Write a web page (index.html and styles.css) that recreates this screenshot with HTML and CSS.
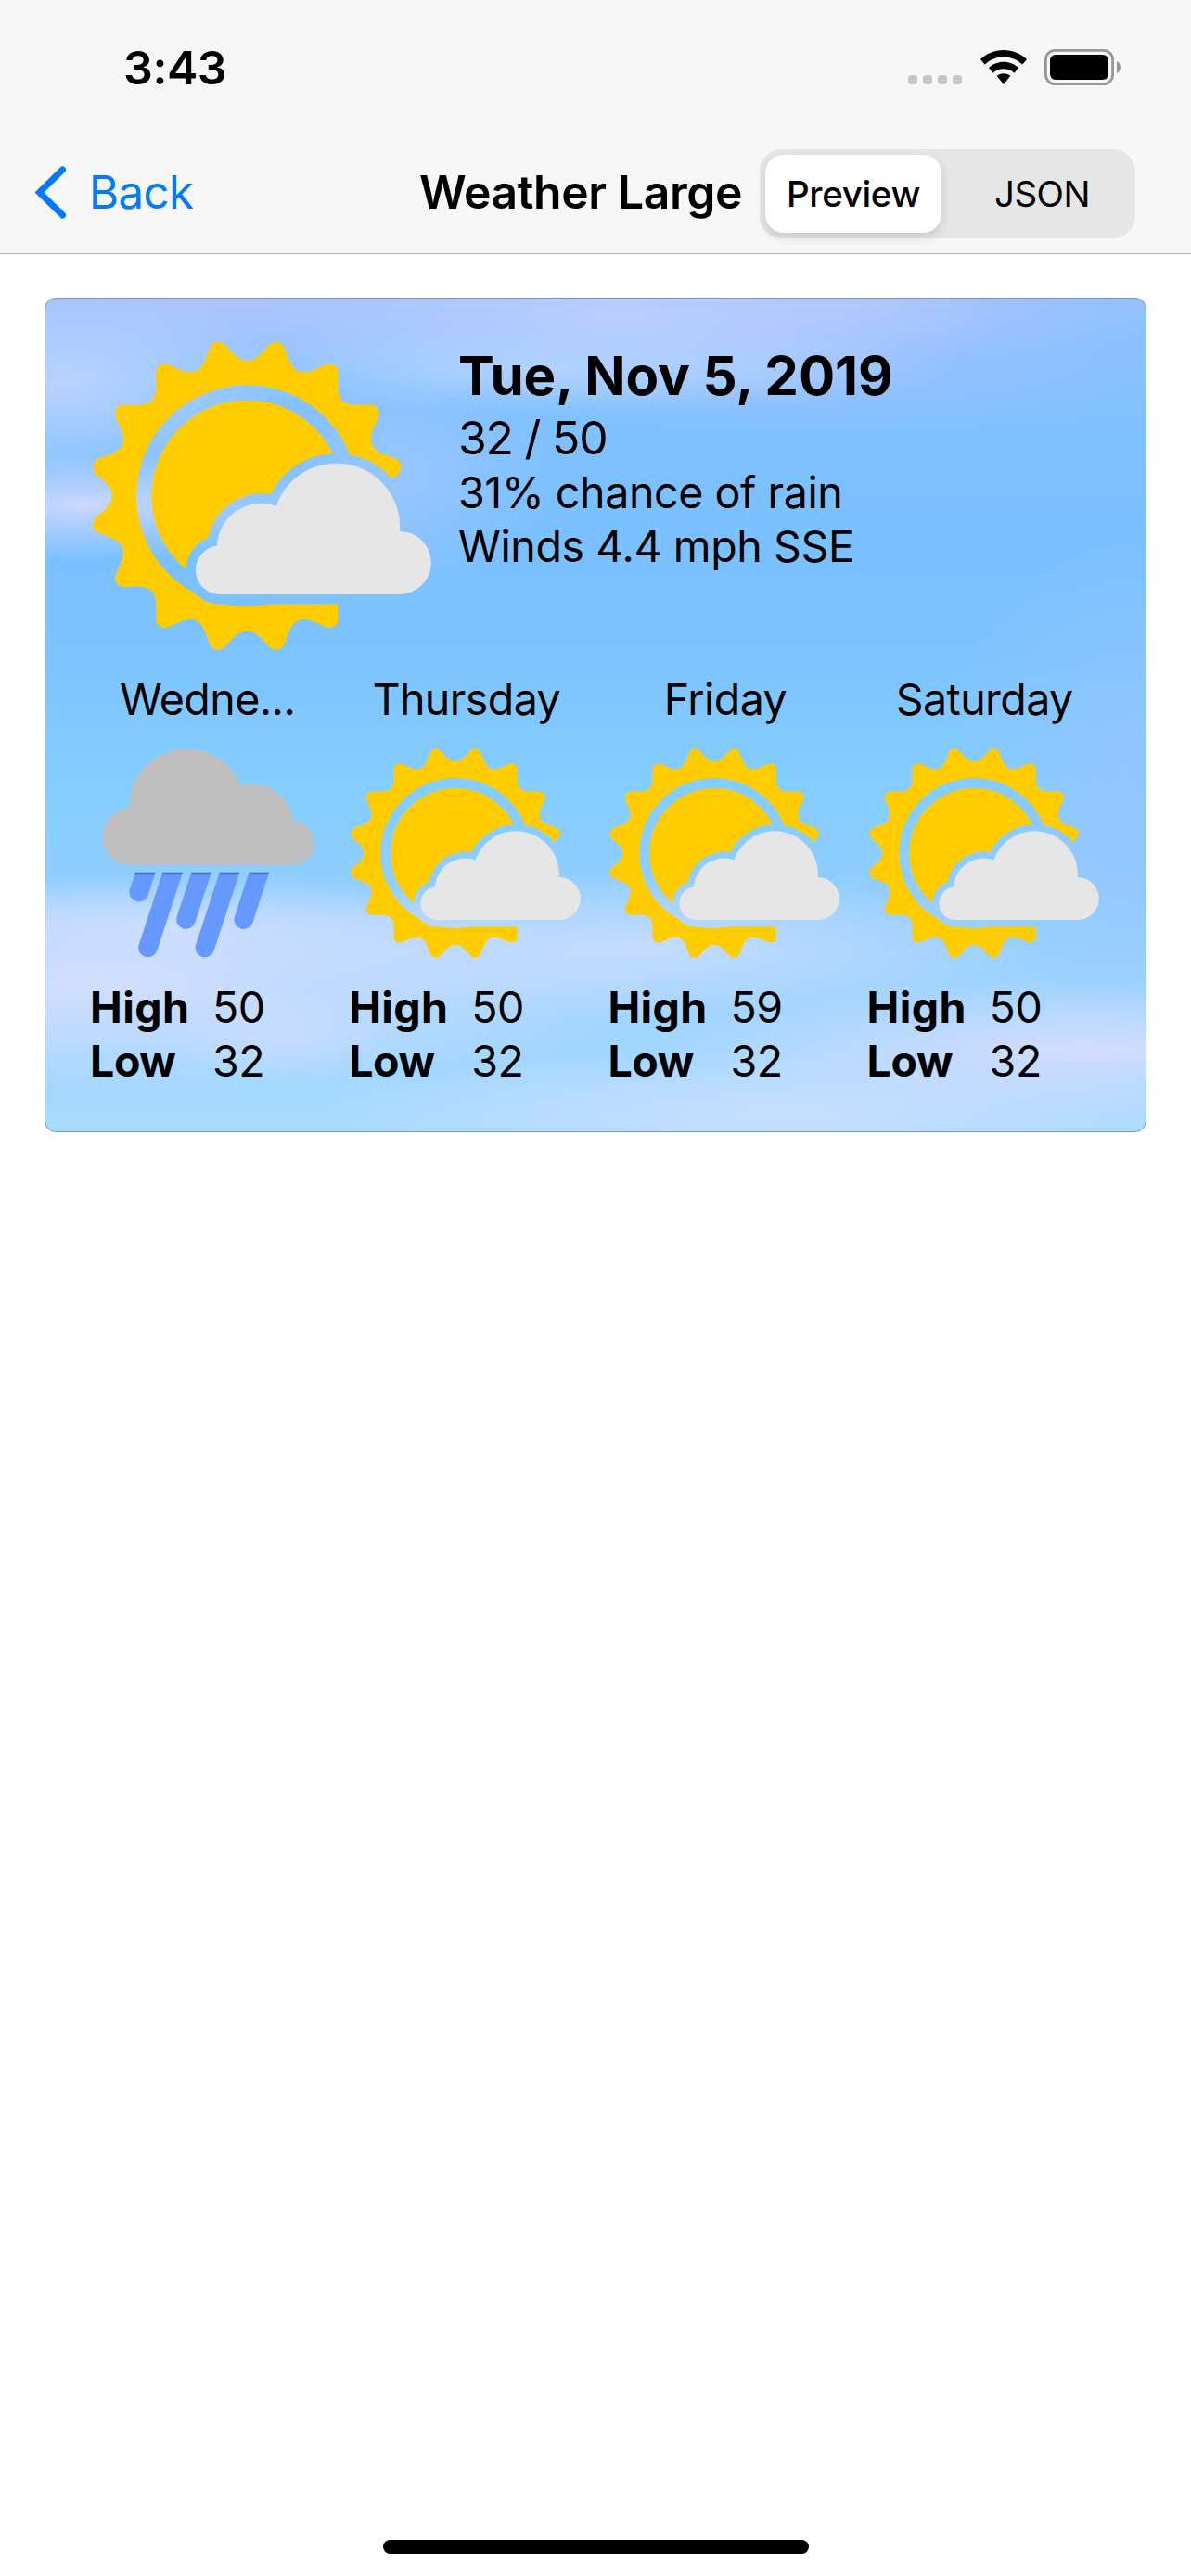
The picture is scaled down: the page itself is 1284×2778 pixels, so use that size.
FILE: index.html
```html
<!DOCTYPE html>
<html lang="en">
<head>
<meta charset="utf-8">
<title>Weather Large</title>
<link rel="stylesheet" href="styles.css">
</head>
<body>
<svg class="defs" width="0" height="0" aria-hidden="true">
  <defs>
    <path id="ray" d="M0 0L-85.3 -428.6C-66 -432.5 -56 -447 -46 -460C-36 -475 -28 -491 -20 -500Q-12 -508 0 -508Q12 -508 20 -500C28 -491 36 -475 46 -460C56 -447 66 -432.5 85.3 -428.6Z"/>
    <path id="cloud" d="M592 994A78.800 78.800 0 0 1 583 837A144 144 0 0 1 775 708A206 206 0 0 1 1175 790A102 102 0 0 1 1174 994Z"/>
    <mask id="gaps" maskUnits="userSpaceOnUse" x="150" y="150" width="1150" height="1050">
      <rect x="150" y="150" width="1150" height="1050" fill="#fff"/>
      <circle cx="680" cy="675" r="334" fill="none" stroke="#000" stroke-width="49"/>
      <use href="#cloud" fill="#000" stroke="#000" stroke-width="64" stroke-linejoin="round"/>
    </mask>
    <symbol id="partly-cloudy" viewBox="181 175 1096 1000">
      <g mask="url(#gaps)" fill="#fc0">
        <circle cx="680" cy="675" r="430"/>
        <g transform="translate(680 675)">
          <use href="#ray" transform="rotate(11.25)"/><use href="#ray" transform="rotate(33.75)"/>
          <use href="#ray" transform="rotate(56.25)"/><use href="#ray" transform="rotate(78.75)"/>
          <use href="#ray" transform="rotate(101.25)"/><use href="#ray" transform="rotate(123.75)"/>
          <use href="#ray" transform="rotate(146.25)"/><use href="#ray" transform="rotate(168.75)"/>
          <use href="#ray" transform="rotate(191.25)"/><use href="#ray" transform="rotate(213.75)"/>
          <use href="#ray" transform="rotate(236.25)"/><use href="#ray" transform="rotate(258.75)"/>
          <use href="#ray" transform="rotate(281.25)"/><use href="#ray" transform="rotate(303.75)"/>
          <use href="#ray" transform="rotate(326.25)"/><use href="#ray" transform="rotate(348.75)"/>
        </g>
      </g>
      <use href="#cloud" fill="#e6e6e6"/>
    </symbol>
    <clipPath id="below-cloud"><rect x="0" y="133.7" width="228" height="95"/></clipPath>
    <linearGradient id="drop-shade" x1="0" y1="133.7" x2="0" y2="137.5" gradientUnits="userSpaceOnUse">
      <stop offset="0" stop-color="#4468b4"/><stop offset="1" stop-color="#69f"/>
    </linearGradient>
    <symbol id="rain" viewBox="0 0 228 226">
      <path fill="#bfbfbf" d="M30.6 125.7A30.7 30.7 0 0 1 30 64.4A62.500 62.500 0 0 1 150.6 40A46 46 0 0 1 207.4 78.4A23.7 23.7 0 0 1 204.4 125.7Z"/>
      <g clip-path="url(#below-cloud)" fill="none" stroke="url(#drop-shade)" stroke-width="20.6" stroke-linecap="round">
        <path d="M51.1 123.7L40.8 155.2M80.4 123.7L50.5 215M111.4 123.7L91.5 184.6M141.8 123.7L111.9 215M173.6 123.7L153.7 184.6"/>
      </g>
    </symbol>
  </defs>
</svg>

<div class="screen">
  <header class="header">
    <div class="status">
      <span class="time">3:43</span>
      <div class="indicators">
        <div class="dots"><i></i><i></i><i></i><i></i></div>
        <svg class="wifi" viewBox="0 0 50 37">
          <path d="M25 0C34.600 0 43.400 3.700 50 10L45.300 15.600C40 10.500 32.900 7.400 25 7.400C17.100 7.400 10 10.500 4.700 15.600L0 10C6.600 3.700 15.400 0 25 0Z"/>
          <path d="M25 12.700C31.200 12.700 36.800 15.100 41 19L36.500 24.700C33.500 22 29.400 20.300 25 20.300C20.600 20.300 16.500 22 13.500 24.700L9 19C13.200 15.100 18.800 12.700 25 12.700Z"/>
          <path d="M25 25.200C27.800 25.200 30.400 26.200 32.400 27.800L25 37L17.600 27.800C19.600 26.200 22.200 25.200 25 25.200Z"/>
        </svg>
        <svg class="battery" viewBox="0 0 82 39">
          <rect x="1.400" y="1.400" width="72.200" height="36.200" rx="10" fill="none" stroke="#979797" stroke-width="2.800"/>
          <rect x="6" y="6" width="63" height="27" rx="6"/>
          <path d="M78 13C80.400 14.200 82 16.500 82 19.500S80.400 24.800 78 26Z" fill="#979797"/>
        </svg>
      </div>
    </div>
    <nav class="nav">
      <a class="back">
        <svg viewBox="0 0 34 57"><path d="M29.500 4L4.500 28.500L29.500 53" fill="none" stroke="#007aff" stroke-width="7" stroke-linecap="round" stroke-linejoin="miter"/></svg>
        <span>Back</span>
      </a>
      <h1 class="title">Weather Large</h1>
      <div class="segments">
        <span class="segment selected">Preview</span>
        <span class="segment">JSON</span>
      </div>
    </nav>
  </header>

  <main class="content">
    <section class="card">
      <div class="today">
        <svg class="today-icon"><use href="#partly-cloudy"/></svg>
        <div class="today-text">
          <h2 class="date">Tue, Nov 5, 2019</h2>
          <p class="range">32 / 50</p>
          <p class="detail">31% chance of rain</p>
          <p class="detail">Winds 4.4 mph SSE</p>
        </div>
      </div>
      <div class="forecast">
        <div class="day">
          <p class="day-name">Wedne...</p>
          <svg class="day-icon"><use href="#rain"/></svg>
          <dl class="temps"><dt>High</dt><dd>50</dd><dt class="low">Low</dt><dd>32</dd></dl>
        </div>
        <div class="day">
          <p class="day-name">Thursday</p>
          <svg class="day-icon"><use href="#partly-cloudy"/></svg>
          <dl class="temps"><dt>High</dt><dd>50</dd><dt class="low">Low</dt><dd>32</dd></dl>
        </div>
        <div class="day">
          <p class="day-name">Friday</p>
          <svg class="day-icon"><use href="#partly-cloudy"/></svg>
          <dl class="temps"><dt>High</dt><dd>59</dd><dt class="low">Low</dt><dd>32</dd></dl>
        </div>
        <div class="day">
          <p class="day-name">Saturday</p>
          <svg class="day-icon"><use href="#partly-cloudy"/></svg>
          <dl class="temps"><dt>High</dt><dd>50</dd><dt class="low">Low</dt><dd>32</dd></dl>
        </div>
      </div>
    </section>
  </main>
  <footer class="home"><div class="home-bar"></div></footer>
</div>
</body>
</html>
```
FILE: styles.css
```css
* { box-sizing: border-box; margin: 0; padding: 0; }

body {
  width: 1284px;
  background: #fff;
  color: #000;
  font-family: Inter, "Liberation Sans", sans-serif;
}

svg { display: block; }
.defs { position: absolute; }

.screen { display: flex; flex-direction: column; height: 2778px; overflow: hidden; }

/* Header */
.header { height: 274px; background: #f7f7f7; border-bottom: 1px solid #b2b2b2; }

.status {
  display: flex;
  align-items: center;
  justify-content: space-between;
  height: 145px;
  padding: 0 76px 0 133px;
}
.time { font-size: 50px; font-weight: 600; line-height: 60px; letter-spacing: -0.4px; }
.indicators { display: flex; align-items: center; }
.dots { display: flex; gap: 6px; margin: 27px 20px 0 0; }
.dots i { width: 10px; height: 10px; border-radius: 3.500px; background: #c5c6c6; }
.wifi { width: 50px; height: 37px; margin-right: 19px; }
.battery { width: 82px; height: 39px; }

.nav {
  display: flex;
  align-items: center;
  height: 128px;
  padding: 0 60px 0 38px;
}
.back { display: flex; align-items: center; gap: 24px; width: 414px; color: #007aff; }
.back svg { width: 34px; height: 57px; margin-top: -4px; }
.back span { font-size: 49.500px; line-height: 60px; letter-spacing: -0.8px; margin-top: -4px; }
.title { width: 367px; font-size: 49.800px; font-weight: 600; line-height: 60px; letter-spacing: -0.350px; white-space: nowrap; margin-top: -4px; }

.segments {
  display: flex;
  width: 405px;
  height: 96px;
  padding: 6px;
  border-radius: 24px;
  background: #e6e6e6;
}
.segment {
  display: flex;
  align-items: center;
  justify-content: center;
  flex: 1;
  padding-left: 14px;
  font-size: 38.500px;
  line-height: 48px;
  letter-spacing: -0.5px;
}
.segment.selected {
  flex: 0 0 190px;
  padding-left: 0;
  background: #fff;
  border-radius: 20px;
  font-weight: 500;
  letter-spacing: -0.350px;
  box-shadow: 0 5px 12px rgba(0, 0, 0, .13);
}

/* Weather card */
.content { flex: 1; padding: 47px 48px 0; }

.card {
  height: 900px;
  padding: 46px 47px 0;
  border: 1px solid #7397c2;
  border-radius: 12px;
  background:
    radial-gradient(ellipse 260px 110px at 20px 90px, rgba(190, 212, 255, .95), transparent),
    radial-gradient(ellipse 420px 50px at 560px 75px, rgba(182, 214, 255, .8), transparent),
    radial-gradient(ellipse 420px 90px at 620px 20px, rgba(190, 207, 255, .95), transparent),
    radial-gradient(ellipse 480px 80px at 180px 5px, rgba(176, 196, 255, .9), transparent),
    radial-gradient(ellipse 360px 60px at 880px 10px, rgba(176, 196, 255, .8), transparent),
    radial-gradient(ellipse 430px 65px at 840px 80px, rgba(154, 192, 255, .9), transparent),
    radial-gradient(ellipse 270px 58px at 40px 222px, rgba(208, 216, 255, .95), transparent),
    radial-gradient(ellipse 170px 120px at 380px 190px, rgba(160, 200, 255, .8), transparent),
    radial-gradient(ellipse 230px 260px at 1188px 520px, rgba(150, 196, 255, .85), transparent),
    radial-gradient(ellipse 420px 60px at 130px 680px, rgba(214, 224, 255, .75), transparent),
    radial-gradient(ellipse 620px 110px at 60px 740px, rgba(218, 224, 255, .9), transparent),
    radial-gradient(ellipse 430px 80px at 640px 700px, rgba(206, 222, 255, .85), transparent),
    radial-gradient(ellipse 460px 75px at 1120px 810px, rgba(214, 221, 255, .95), transparent),
    radial-gradient(ellipse 500px 70px at 800px 880px, rgba(202, 223, 255, .95), transparent),
    radial-gradient(ellipse 130px 50px at 260px 795px, rgba(200, 219, 255, .7), transparent),
    linear-gradient(#90c0ff 0, #82c1ff 100px, #7bc0ff 240px, #7dc3ff 380px, #84ceff 530px, #90cdff 620px, #a0d4ff 760px, #a9dbff 900px);
}

.today { display: flex; height: 357px; }
.today-icon { flex: none; width: 365px; height: 333.300px; margin-left: 4px; }
.today-text { margin-left: 29px; white-space: nowrap; }
.date { font-size: 58.200px; font-weight: 700; line-height: 74px; letter-spacing: -0.120px; }
.range { font-size: 49.800px; line-height: 60px; letter-spacing: -1.200px; }
.detail { font-size: 46.500px; line-height: 58px; letter-spacing: -0.380px; }

.forecast { display: grid; grid-template-columns: repeat(4, 255.200px); column-gap: 24px; }
.day { display: flex; flex-direction: column; align-items: center; }
.day-name { height: 58px; font-size: 46.500px; line-height: 58px; letter-spacing: -0.550px; }
.day-icon { width: 248px; height: 226px; margin: 24px 1px 0 0; }
.temps {
  display: grid;
  grid-template-columns: 132px auto;
  align-self: stretch;
  justify-content: start;
  margin-top: 24px;
  padding-left: 1px;
  font-size: 46.500px;
  line-height: 58px;
}
.temps dt { font-weight: 700; letter-spacing: 0.400px; }
.temps dt.low { letter-spacing: -0.400px; }
.temps dd { letter-spacing: -0.400px; }

/* Home indicator */
.home { display: flex; justify-content: center; height: 39px; padding-left: 1px; }
.home-bar { width: 459px; height: 15px; border-radius: 8px; background: #000; }
```
